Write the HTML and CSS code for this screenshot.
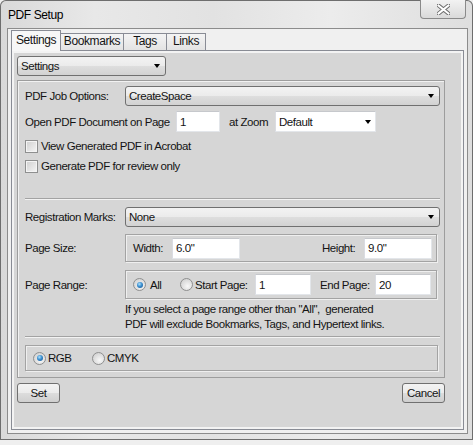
FILE: index.html
```html
<!DOCTYPE html>
<html>
<head>
<meta charset="utf-8">
<link rel="stylesheet" href="styles.css">
</head>
<body>
<div class="window">
  <div class="titlebar">
    <span class="title">PDF Setup</span>
    <div class="close-btn">
      <svg width="13" height="11" viewBox="0 0 13 11">
        <path d="M1.5 1.5 L11.5 9.5 M11.5 1.5 L1.5 9.5" stroke="#6a6a6a" stroke-width="4" stroke-linecap="square"/>
        <path d="M1.5 1.5 L11.5 9.5 M11.5 1.5 L1.5 9.5" stroke="#ffffff" stroke-width="2" stroke-linecap="square"/>
      </svg>
    </div>
  </div>
  <div class="client">
    <div class="tabs">
      <div class="tab active t-settings">Settings</div>
      <div class="tab t-bookmarks">Bookmarks</div>
      <div class="tab t-tags">Tags</div>
      <div class="tab t-links">Links</div>
    </div>
    <div class="tabpage">
      <div class="dropdown dd-settings"><span>Settings</span><i class="arrow"></i></div>
      <div class="panel">
        <div class="row r-first">
          <span class="lbl">PDF Job Options:</span>
          <div class="dropdown dd-wide"><span>CreateSpace</span><i class="arrow"></i></div>
        </div>
        <div class="row r-open">
          <span class="lbl-open">Open PDF Document on Page</span>
          <div class="field f-page">1</div>
          <span class="lbl-zoom">at Zoom</span>
          <div class="field combo"><span>Default</span><i class="arrow"></i></div>
        </div>
        <div class="check c-first"><i class="box"></i><span>View Generated PDF in Acrobat</span></div>
        <div class="check"><i class="box"></i><span>Generate PDF for review only</span></div>
        <div class="sep s-first"></div>
        <div class="row r-reg">
          <span class="lbl">Registration Marks:</span>
          <div class="dropdown dd-wide"><span>None</span><i class="arrow"></i></div>
        </div>
        <div class="row r-size">
          <span class="lbl">Page Size:</span>
          <div class="group g-size">
            <span class="lbl-width">Width:</span>
            <div class="field f-dim">6.0"</div>
            <span class="lbl-height">Height:</span>
            <div class="field f-dim">9.0"</div>
          </div>
        </div>
        <div class="row r-range">
          <span class="lbl">Page Range:</span>
          <div class="group g-range">
            <i class="radio on"></i><span class="lbl-all">All</span>
            <i class="radio"></i><span class="lbl-start">Start Page:</span>
            <div class="field f-num">1</div>
            <span class="lbl-end">End Page:</span>
            <div class="field f-num">20</div>
          </div>
        </div>
        <p class="note">If you select a page range other than "All",&nbsp; generated<br>PDF will exclude Bookmarks, Tags, and Hypertext links.</p>
        <div class="sep s-second"></div>
        <div class="group g-color">
          <i class="radio on"></i><span class="lbl-rgb">RGB</span>
          <i class="radio"></i><span class="lbl-cmyk">CMYK</span>
        </div>
      </div>
      <div class="buttons">
        <div class="btn">Set</div>
        <div class="btn">Cancel</div>
      </div>
    </div>
  </div>
</div>
</body>
</html>
```

FILE: styles.css
```css
html, body {
  margin: 0;
  padding: 0;
}
body {
  width: 473px;
  height: 445px;
  overflow: hidden;
  background: #efefef;
  font-family: "Liberation Sans", Arial, sans-serif;
  font-size: 11.5px;
  letter-spacing: -0.45px;
  color: #141414;
  white-space: nowrap;
}
.window {
  height: 440px;
  box-sizing: border-box;
  background: linear-gradient(90deg, #d9d9d9 0%, #e8e8e8 20%, #e2e2e2 45%, #ececec 70%, #dedede 100%);
  box-shadow: inset 0 0 0 1px #6e6e6e;
  border-radius: 6px 6px 0 0;
}
.titlebar {
  display: flex;
  align-items: flex-start;
  height: 28px;
}
.title {
  padding-left: 8px;
  margin-top: 8px;
  font-size: 12px;
  letter-spacing: -0.4px;
  line-height: 14px;
  color: #000;
}
.close-btn {
  margin-left: auto;
  margin-right: 7px;
  width: 46px;
  height: 19px;
  box-sizing: border-box;
  border: 1px solid #8a8a8a;
  border-top: none;
  border-radius: 0 0 4px 4px;
  background: linear-gradient(#f2f2f2, #dadada);
  display: flex;
  align-items: center;
  justify-content: center;
}
.client {
  margin-left: 7px;
  width: 461px;
  height: 406px;
  box-sizing: border-box;
  border: 1px solid #8c8c8c;
  background: #f0f0f0;
}
.tabs {
  display: flex;
  align-items: flex-end;
  height: 21px;
  padding-left: 3px;
}
.tab {
  box-sizing: border-box;
  height: 17px;
  border: 1px solid #898c95;
  border-bottom: none;
  background: linear-gradient(#f4f4f4, #e3e3e3);
  text-align: center;
  line-height: 15px;
  margin-left: -1px;
  font-size: 12px;
  letter-spacing: -0.4px;
}
.tab.active {
  height: 21px;
  margin-bottom: -1px;
  margin-left: 0;
  background: #f7f7f7;
  position: relative;
  z-index: 1;
  line-height: 18px;
}
.t-settings { width: 50px; }
.t-bookmarks { width: 64px; }
.t-tags { width: 44px; }
.t-links { width: 40px; }
.tabpage {
  margin: 0 3px;
  height: 380px;
  box-sizing: border-box;
  border: 1px solid #898c95;
  background: #d6d6d6;
  box-shadow: inset 0 0 0 2px #f3f3f3;
  padding: 5px 0 0 5px;
}
.dropdown {
  box-sizing: border-box;
  height: 20px;
  border: 1px solid #707070;
  border-radius: 3px;
  background: linear-gradient(#f3f3f3 0%, #ebebeb 50%, #dedede 50%, #d2d2d2 100%);
  display: flex;
  align-items: center;
  padding-left: 3px;
}
.arrow {
  margin-left: auto;
  margin-right: 5px;
  width: 0;
  height: 0;
  border-left: 3.5px solid transparent;
  border-right: 3.5px solid transparent;
  border-top: 4px solid #000;
}
.dd-settings { width: 149px; }
.dd-wide { width: 315px; }
.panel {
  margin-top: 4px;
  width: 428px;
  height: 298px;
  box-sizing: border-box;
  border: 1px solid #9d9d9d;
  box-shadow: inset 1px 1px 0 #f2f2f2;
  padding: 5px 0 0 7px;
}
.row {
  display: flex;
  align-items: center;
  height: 20px;
}
.lbl { width: 100px; }
.r-open { margin-top: 5px; height: 21px; }
.lbl-open { width: 151px; }
.lbl-zoom { width: 46px; margin-left: 9px; }
.field {
  box-sizing: border-box;
  height: 21px;
  background: #fff;
  border: 1px solid;
  border-color: #c6c8cc #e3e6ea #e3e6ea #dadce2;
  padding-left: 3px;
  display: flex;
  align-items: center;
}
.f-page { width: 44px; }
.combo { width: 101px; }
.combo .arrow { margin-right: 4px; }
.check {
  display: flex;
  align-items: center;
  height: 20px;
}
.c-first { margin-top: 4px; }
.box {
  width: 13px;
  height: 13px;
  box-sizing: border-box;
  border: 1px solid #8e8f8f;
  background: linear-gradient(135deg, #cfcfcf, #f6f6f6);
  box-shadow: inset 0 0 0 1px #f4f4f4;
  margin-right: 3px;
}
.sep {
  width: 415px;
  height: 0;
  border-top: 1px solid #a3a3a3;
  border-bottom: 1px solid #f3f3f3;
}
.s-first { margin-top: 22px; }
.r-reg { margin-top: 7px; }
.r-size { margin-top: 7px; height: 28px; }
.r-range { margin-top: 8px; height: 29px; }
.group {
  box-sizing: border-box;
  border: 1px solid #a3a3a3;
  box-shadow: inset 1px 1px 0 #efefef, 1px 1px 0 #efefef;
  display: flex;
  align-items: center;
  padding-left: 7px;
}
.g-size { width: 312px; height: 28px; padding-right: 4px; }
.lbl-width { width: 39px; }
.f-dim { width: 68px; }
.lbl-height { width: 42px; margin-left: auto; }
.g-range { width: 312px; height: 29px; }
.lbl-all { width: 30px; margin-left: 4px; }
.lbl-start { width: 60px; margin-left: 2px; }
.f-num { width: 56px; }
.lbl-end { width: 55px; margin-left: 9px; }
.radio {
  width: 13px;
  height: 13px;
  box-sizing: border-box;
  border: 1px solid #8e8f8f;
  border-radius: 50%;
  background: radial-gradient(circle at 60% 65%, #f8f8f8 0%, #dedede 55%, #c9c9c9 100%);
  position: relative;
}
.radio.on::after {
  content: "";
  position: absolute;
  left: 2.5px;
  top: 2.5px;
  width: 6px;
  height: 6px;
  border-radius: 50%;
  background: radial-gradient(circle at 40% 35%, #aee3ff 0%, #3c8fcf 45%, #134f8a 100%);
}
.note {
  margin: 3px 0 0 100px;
  line-height: 15px;
}
.s-second { margin-top: 4px; }
.g-color {
  margin-top: 7px;
  width: 413px;
  height: 26px;
}
.lbl-rgb { width: 44px; margin-left: 2px; }
.lbl-cmyk { margin-left: 2px; }
.buttons {
  display: flex;
  justify-content: space-between;
  width: 428px;
  margin-top: 5px;
}
.btn {
  box-sizing: border-box;
  width: 43px;
  height: 20px;
  border: 1px solid #707070;
  border-radius: 3px;
  background: linear-gradient(#f3f3f3 0%, #ebebeb 50%, #dddddd 50%, #cfcfcf 100%);
  display: flex;
  align-items: center;
  justify-content: center;
}
```
